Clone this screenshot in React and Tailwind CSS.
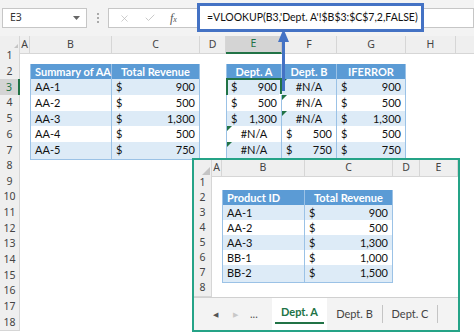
import React from 'react';
import { X, Check } from 'lucide-react';

const mainCols = 'grid grid-cols-[20px_10px_82px_88px_26px_56px_55px_69px_50px_1fr]';
const subCols = 'grid grid-cols-[18px_10px_83px_88px_27px_1fr]';

// one entry per table cell: h = header, t = text, m = money, na = #N/A
const leftTable = {
    2: [{ h: 'Summary of AA' }, { h: 'Total Revenue', center: true }],
    3: [{ t: 'AA-1' }, { m: '900' }],
    4: [{ t: 'AA-2' }, { m: '500' }],
    5: [{ t: 'AA-3' }, { m: '1,300' }],
    6: [{ t: 'AA-4' }, { m: '500' }],
    7: [{ t: 'AA-5' }, { m: '750' }],
};

const rightTable = {
    2: [{ h: 'Dept. A', center: true }, { h: 'Dept. B', center: true }, { h: 'IFERROR', center: true }],
    3: [{ m: '900', sel: true }, { na: true, tri: true }, { m: '900' }],
    4: [{ m: '500' }, { na: true, tri: true }, { m: '500' }],
    5: [{ m: '1,300' }, { na: true, tri: true }, { m: '1,300' }],
    6: [{ na: true, tri: true }, { m: '500' }, { m: '500' }],
    7: [{ na: true, tri: true }, { m: '750' }, { m: '750' }],
};

const productTable = {
    2: [{ h: 'Product ID' }, { h: 'Total Revenue', center: true }],
    3: [{ t: 'AA-1' }, { m: '900' }],
    4: [{ t: 'AA-2' }, { m: '500' }],
    5: [{ t: 'AA-3' }, { m: '1,300' }],
    6: [{ t: 'BB-1' }, { m: '1,000' }],
    7: [{ t: 'BB-2' }, { m: '1,500' }],
};

const TableCell = ({ c, row, first }) => {
    const band = row % 2 === 1;
    let bg = band ? 'bg-[#ddebf7]' : 'bg-white';
    if (c.h) bg = 'bg-[#5b9bd5] text-white font-bold';

    return (
        <div className={`relative h-full flex items-center px-[4px] whitespace-nowrap border-r border-b border-[#9bc2e6] ${first ? 'border-l' : ''} ${bg}`}>
            {c.h && <span className={c.center ? 'w-full text-center' : ''}>{c.h}</span>}
            {c.t && <span>{c.t}</span>}
            {c.m && (
                <span className="w-full flex justify-between">
                    <span>$</span>
                    <span>{c.m}</span>
                </span>
            )}
            {c.na && <span className="w-full text-center">#N/A</span>}
            {c.tri && (
                <span className="absolute top-0 left-0 w-0 h-0 border-t-[5px] border-t-[#217346] border-r-[5px] border-r-transparent" />
            )}
            {c.sel && (
                <>
                    <span className="absolute -inset-[1px] border-2 border-[#217346]" />
                    <span className="absolute -right-[3px] -bottom-[3px] w-[5px] h-[5px] bg-[#217346] border border-white" />
                </>
            )}
        </div>
    );
};

const RowHead = ({ n, active }) => (
    <div className={`h-full flex items-center justify-center border-r border-b border-[#d6d6d6] text-[10.5px] font-['Noto_Sans',sans-serif] ${active ? 'bg-[#d4d4d4] text-[#217346] border-r-2 border-r-[#217346]' : 'bg-[#efefef] text-[#444]'}`}>
        {n}
    </div>
);

const Corner = () => (
    <div className="h-full bg-[#efefef] border-r border-b border-[#d6d6d6] flex items-end justify-end p-[1px]">
        <svg width="8" height="8" viewBox="0 0 8 8">
            <path d="M8 0 L8 8 L0 8 Z" fill="#c4c4c4" />
        </svg>
    </div>
);

const ColHead = ({ l, active }) => (
    <div className={`h-full flex items-center justify-center border-b text-[10.5px] font-['Noto_Sans',sans-serif] ${active ? 'bg-[#d4d4d4] text-[#217346] border-b-2 border-b-[#217346] border-r border-r-[#c4c4c4]' : 'bg-[#efefef] text-[#444] border-b-[#d6d6d6] border-r border-r-[#d6d6d6]'}`}>
        {l}
    </div>
);

const MainSheet = () => {
    const rows = Array.from({ length: 18 }, (_, i) => i + 1);
    return (
        <div className="font-['Lato',sans-serif] text-[11px] text-[#111]">
            <div className={`${mainCols} h-[12px]`}>
                <Corner />
                {['A', 'B', 'C', 'D', 'E', 'F', 'G', 'H'].map((l) => (
                    <ColHead key={l} l={l} active={l === 'E'} />
                ))}
                <div className="bg-[#efefef] border-b border-[#d6d6d6]" />
            </div>
            {rows.map((r) => (
                <div key={r} className={`${mainCols} h-[15.7px]`}>
                    <RowHead n={r} active={r === 3} />
                    <div />
                    {leftTable[r] ? (
                        leftTable[r].map((c, i) => <TableCell key={i} c={c} row={r} first={i === 0} />)
                    ) : (
                        <>
                            <div />
                            <div />
                        </>
                    )}
                    <div />
                    {rightTable[r] ? (
                        rightTable[r].map((c, i) => <TableCell key={i} c={c} row={r} first={i === 0} />)
                    ) : (
                        <>
                            <div />
                            <div />
                            <div />
                        </>
                    )}
                    <div />
                    <div />
                </div>
            ))}
        </div>
    );
};

const FormulaBar = () => (
    <div className="h-[36px] bg-[#f3f3f3] flex items-start font-['Noto_Sans',sans-serif]">
        <div className="ml-[2px] mt-[8px] w-[85px] h-[20px] bg-white border border-[#c6c6c6] flex items-center justify-between pl-[7px] pr-[6px] text-[10.5px] text-[#333]">
            <span>E3</span>
            <svg width="7" height="4" viewBox="0 0 7 4">
                <path d="M0 0 L7 0 L3.5 4 Z" fill="#666" />
            </svg>
        </div>
        <div className="w-[21px] h-[36px] flex flex-col items-center justify-center gap-[2px]">
            <span className="w-[2px] h-[2px] bg-[#aaa]" />
            <span className="w-[2px] h-[2px] bg-[#aaa]" />
            <span className="w-[2px] h-[2px] bg-[#aaa]" />
        </div>
        <div className="mt-[8px] w-[89px] h-[20px] bg-white border border-[#c6c6c6] border-r-0 flex items-center pl-[10px] gap-[14px] text-[#b8b8b8]">
            <X size={11} strokeWidth={1.5} />
            <Check size={12} strokeWidth={1.5} />
            <span className="font-['Liberation_Serif',serif] italic text-[12px] text-[#555]">
                f<span className="text-[8px]">x</span>
            </span>
        </div>
        <div className="mt-[3px] w-[227px] h-[29px] border-[3px] border-[#4472c4] bg-white flex items-center pl-[7px] font-['Lato',sans-serif] text-[10.5px] text-[#111] whitespace-nowrap">
            =VLOOKUP(B3,'Dept. A'!$B$3:$C$7,2,FALSE)
        </div>
        <div className="mt-[8px] flex-1 h-[20px] bg-white border border-l-0 border-[#c6c6c6]" />
    </div>
);

const ProductSheet = () => {
    const rows = [1, 2, 3, 4, 5, 6, 7, 8];
    return (
        <div className="absolute left-[192px] top-[158px] w-[268px] h-[174px] border-2 border-[#25a387] bg-white flex flex-col overflow-hidden font-['Lato',sans-serif] text-[11px] text-[#111]">
            <div className={`${subCols} h-[15px] shrink-0`}>
                <Corner />
                {['A', 'B', 'C', 'D', 'E'].map((l) => (
                    <ColHead key={l} l={l} />
                ))}
            </div>
            {rows.map((r) => (
                <div key={r} className={`${subCols} ${r === 8 ? 'h-[17px]' : 'h-[15px]'} shrink-0`}>
                    <RowHead n={r} />
                    <div />
                    {productTable[r] ? (
                        productTable[r].map((c, i) => <TableCell key={i} c={c} row={r} first={i === 0} />)
                    ) : (
                        <>
                            <div />
                            <div />
                        </>
                    )}
                    <div />
                    <div />
                </div>
            ))}
            <div className="flex-1 flex items-stretch bg-[#f3f3f3] border-t border-[#d0d0d0] text-[11px] text-[#444]">
                <div className="w-[78px] flex items-center text-[7px]">
                    <span className="ml-[19px] text-[#555]">◀</span>
                    <span className="ml-[15px] text-[#c8c8c8]">▶</span>
                    <span className="ml-[12px] text-[#555] text-[11px]">...</span>
                </div>
                <div className="w-[55px] bg-white flex flex-col items-center justify-center font-bold text-[#217346]">
                    <span className="border-b-2 border-[#217346] px-[6px] pb-[1px]">Dept. A</span>
                </div>
                <div className="w-[56px] flex items-center justify-center border-r border-[#c4c4c4] my-[7px]">Dept. B</div>
                <div className="w-[55px] flex items-center justify-center border-r border-[#c4c4c4] my-[7px]">Dept. C</div>
                <div className="flex-1" />
            </div>
        </div>
    );
};

const Arrow = () => (
    <svg className="absolute left-[277px] top-[29px]" width="13" height="62" viewBox="0 0 13 62">
        <path d="M6.5 0 L12 13 L1 13 Z" fill="#4472c4" />
        <rect x="5" y="12" width="3" height="50" fill="#4472c4" />
    </svg>
);

export default function App() {
    return (
        <div className="relative w-[474px] h-[333px] overflow-hidden bg-white">
            <FormulaBar />
            <MainSheet />
            <ProductSheet />
            <Arrow />
        </div>
    );
}
